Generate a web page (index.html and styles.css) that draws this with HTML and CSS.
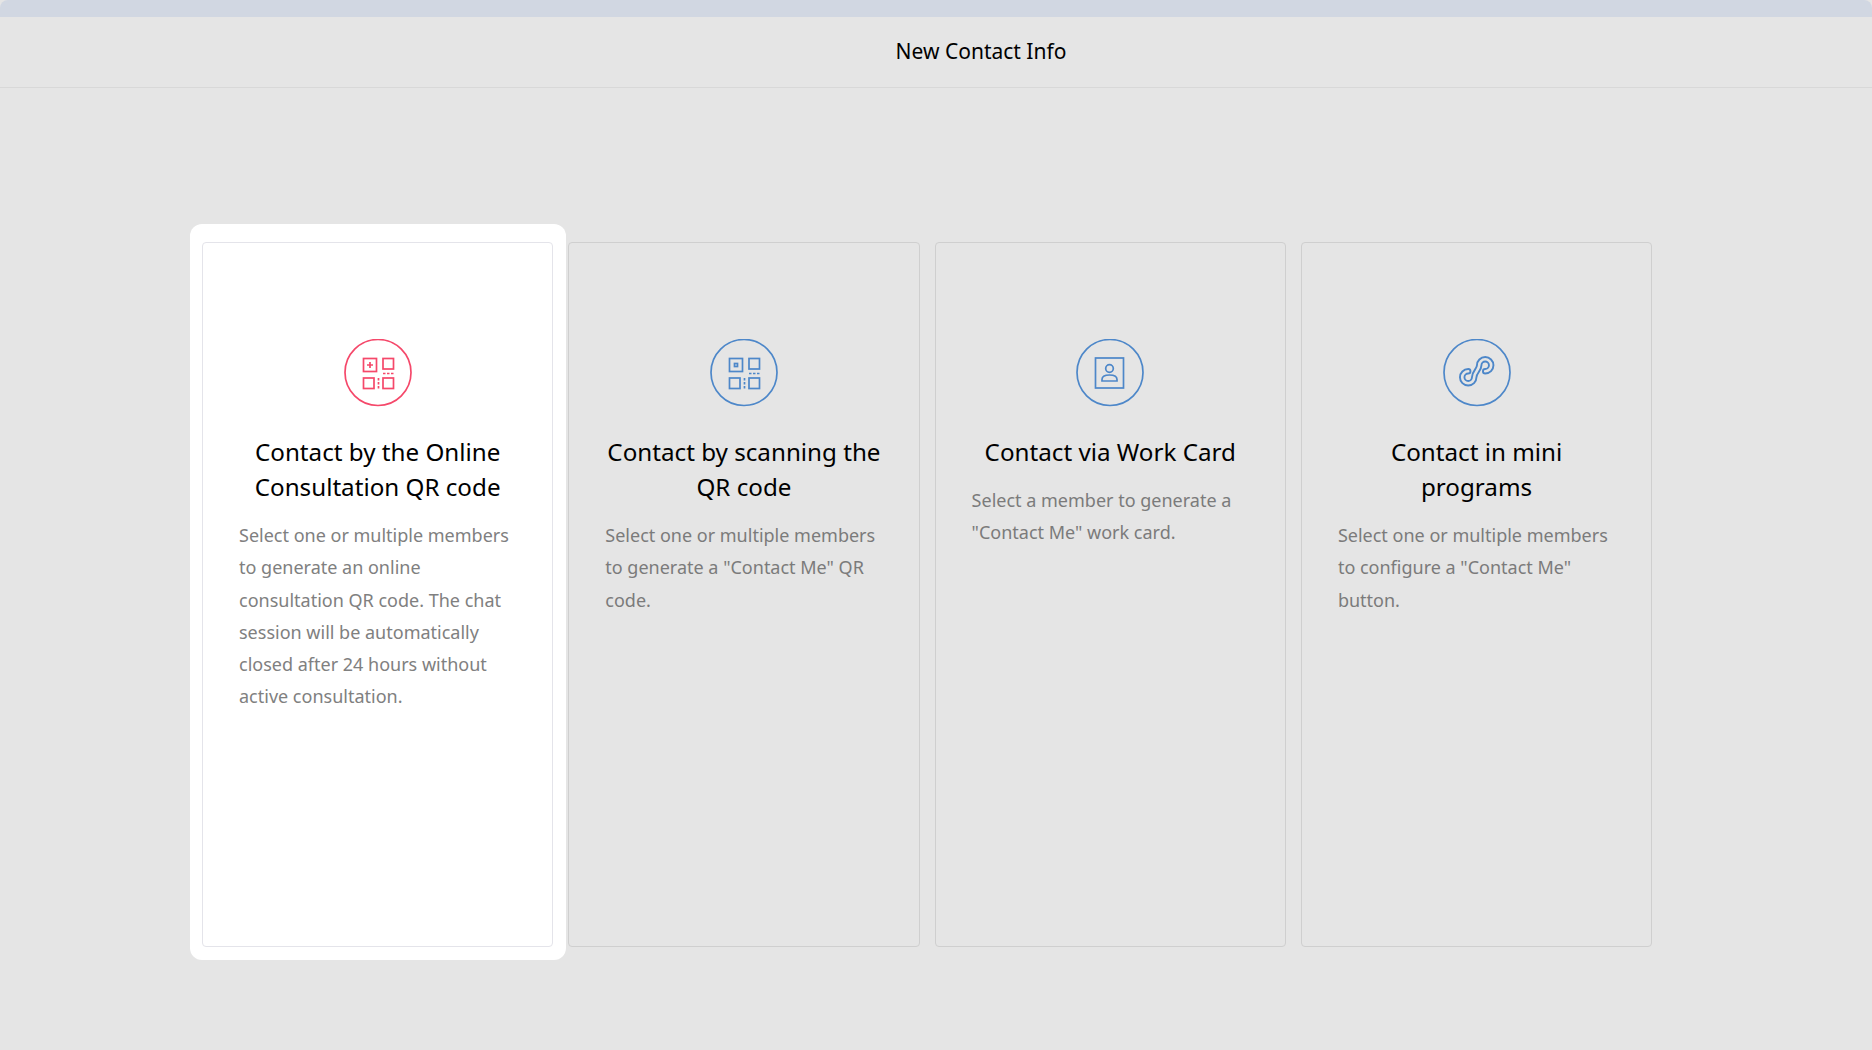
FILE: index.html
```html
<!DOCTYPE html>
<html lang="en">
<head>
  <meta charset="UTF-8" />
  <meta name="viewport" content="width=device-width, initial-scale=1.0"/>
  <title>New Contact Info</title>
  <link rel="stylesheet" href="styles.css">
</head>
<body>

  <div class="top-strip"></div>

  <header>
    <h1>New Contact Info</h1>
  </header>

  <main class="cards">
    <section class="card active">
      <svg class="icon" viewBox="0 0 68 68">
        <circle class="ring" cx="34" cy="33.5" r="33"/>
        <rect x="19.5" y="19.5" width="13" height="13"/>
        <path d="M23 26h6M26 23v6"/>
        <rect x="39" y="19.5" width="10.5" height="10.5"/>
        <path class="dash" d="M39 34.5h10.5"/>
        <rect x="19.5" y="39" width="10.5" height="10.5"/>
        <path class="dash" d="M34.5 39v10.5"/>
        <rect x="39" y="39" width="10.5" height="10.5"/>
      </svg>
      <h2>Contact by the Online Consultation QR code</h2>
      <p>Select one or multiple members to generate an online consultation QR code. The chat session will be automatically closed after 24 hours without active consultation.</p>
    </section>

    <section class="card">
      <svg class="icon" viewBox="0 0 68 68">
        <circle class="ring" cx="34" cy="33.5" r="33"/>
        <rect x="19.5" y="19.5" width="13" height="13"/>
        <rect x="24.5" y="24.5" width="3" height="3"/>
        <rect x="39" y="19.5" width="10.5" height="10.5"/>
        <path class="dash" d="M39 34.5h10.5"/>
        <rect x="19.5" y="39" width="10.5" height="10.5"/>
        <path class="dash" d="M34.5 39v10.5"/>
        <rect x="39" y="39" width="10.5" height="10.5"/>
      </svg>
      <h2>Contact by scanning the QR code</h2>
      <p>Select one or multiple members to generate a "Contact Me" QR code.</p>
    </section>

    <section class="card">
      <svg class="icon" viewBox="0 0 68 68">
        <circle class="ring" cx="34" cy="33.5" r="33"/>
        <rect x="19.5" y="19" width="28" height="30"/>
        <circle cx="33.5" cy="29.5" r="3.8"/>
        <path d="M26 42v-1.5c0-3 3.5-4.5 7.5-4.5s7.5 1.5 7.5 4.5V42z"/>
      </svg>
      <h2>Contact via Work Card</h2>
      <p>Select a member to generate a "Contact Me" work card.</p>
    </section>

    <section class="card">
      <svg class="icon" viewBox="0 0 68 68">
        <circle class="ring" cx="34" cy="33.5" r="33"/>
        <path class="mini-outer" d="M25.2 32.3A6 6 0 1 0 31.2 38.3C31.2 33 36.2 31 36.2 26.3A6 6 0 1 1 42.2 32.3"/>
        <path class="mini-inner" d="M25.2 32.3A6 6 0 1 0 31.2 38.3C31.2 33 36.2 31 36.2 26.3A6 6 0 1 1 42.2 32.3"/>
      </svg>
      <h2>Contact in mini programs</h2>
      <p>Select one or multiple members to configure a "Contact Me" button.</p>
    </section>
  </main>

</body>
</html>
```

FILE: styles.css
```css
* { margin: 0; padding: 0; box-sizing: border-box; }

body {
  height: 1050px;
  overflow: hidden;
  display: flex;
  flex-direction: column;
  background: #e5e5e5;
  color: #000;
  font-family: 'Noto Sans', 'Open Sans', sans-serif;
}

.top-strip {
  height: 17px;
  background: #d1d7e2;
  border-radius: 8px 8px 0 0;
}

header {
  height: 71px;
  display: flex;
  align-items: center;
  justify-content: center;
  padding: 0 0 3px 90px;
  border-bottom: 1px solid #d8d8d8;
}

h1 {
  font-size: 21px;
  font-weight: 400;
}

.cards {
  display: flex;
  gap: 15px;
  padding: 154px 0 0 202px;
}

.card {
  position: relative;
  width: 351.3px;
  height: 705px;
  padding: 96px 36px 0;
  border: 1px solid #cfcfcf;
  border-radius: 4px;
  text-align: center;
}

.card.active {
  background: #fff;
  border-color: #e4e4ea;
}

.card.active::before {
  content: "";
  position: absolute;
  top: -19px;
  left: -13px;
  right: -14px;
  bottom: -14px;
  background: #fff;
  border-radius: 12px;
  z-index: -1;
}

.icon {
  display: block;
  width: 68px;
  height: 68px;
  margin: 0 auto 27px;
  fill: none;
  stroke: #4d87c9;
  stroke-width: 1.7;
}

.active .icon { stroke: #f5486a; }

.dash { stroke-dasharray: 2.5 1.5; }

.mini-outer { stroke-width: 6.4; stroke-linecap: round; }

.mini-inner { stroke: #e5e5e5; stroke-width: 2.6; stroke-linecap: round; }

h2 {
  font-size: 24.2px;
  font-weight: 400;
  line-height: 35px;
  margin: 0 -4px 15px;
}

p {
  font-size: 18px;
  line-height: 32.25px;
  color: #7b7b7b;
  text-align: left;
}

.active p { color: #808080; }
```
